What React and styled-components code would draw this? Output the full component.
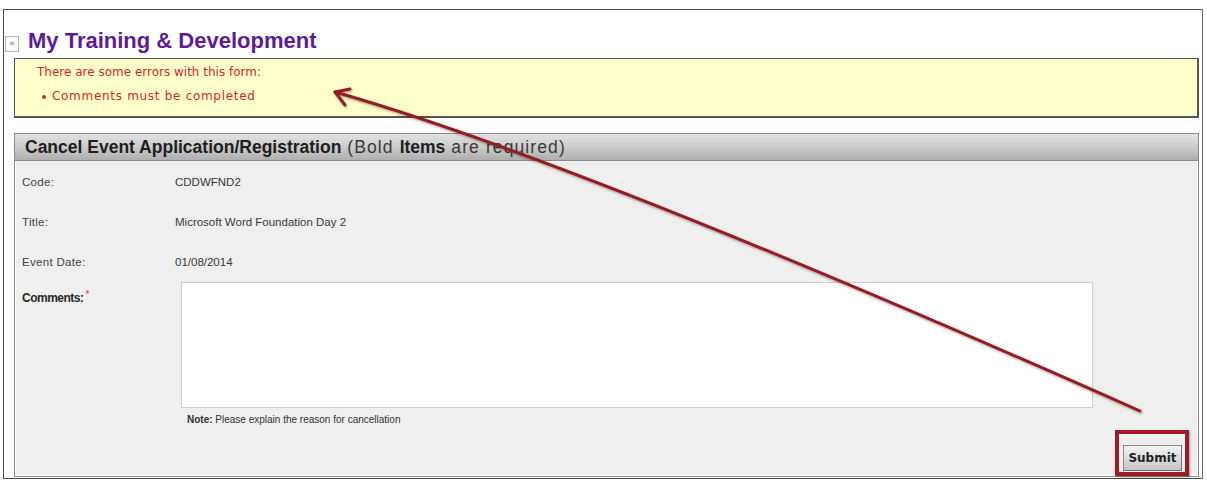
import React from "react";
import styled, { createGlobalStyle } from "styled-components";

const GlobalStyle = createGlobalStyle`
  html, body {
    margin: 0;
    padding: 0;
    background: #ffffff;
  }
  body {
    font-family: "DejaVu Sans", Verdana, sans-serif;
    color: #333;
  }
`;

const Page = styled.div`
  position: relative;
  width: 1207px;
  height: 484px;
  overflow: hidden;
  padding: 9px 4px 0 3px;
  box-sizing: border-box;
`;

const Frame = styled.div`
  height: 470px;
  border: 1px solid #4a4a4a;
  border-right-color: #6a6a6a;
  box-sizing: border-box;
  padding: 20px 3px 0 10px;
  display: flex;
  flex-direction: column;
`;

const TitleRow = styled.div`
  flex-shrink: 0;
  display: flex;
  align-items: center;
  gap: 9px;
  margin-left: -9px;
  height: 22px;
`;

const Collapse = styled.span`
  width: 12px;
  height: 14px;
  border: 1px solid #b8b8b8;
  background: #fafafa;
  color: #777;
  font-size: 9px;
  line-height: 13px;
  text-align: center;
  font-family: "DejaVu Sans", sans-serif;
  margin-top: 6px;
`;

const PageTitle = styled.h1`
  margin: 0;
  font-family: "Liberation Sans", Arial, sans-serif;
  font-size: 22px;
  font-weight: bold;
  color: #5b1c96;
`;

const ErrorBox = styled.div`
  flex-shrink: 0;
  margin-top: 6px;
  height: 60px;
  box-sizing: border-box;
  background: #ffffcc;
  border: 1px solid #555;
  border-width: 1px 2px 2px 1px;
  padding: 5px 0 0 22px;
  color: #cc2a2a;
  font-size: 12px;
  line-height: 16px;
`;

const ErrorList = styled.ul`
  margin: 8px 0 0 0;
  padding-left: 15px;
  list-style: none;
`;

const ErrorItem = styled.li`
  position: relative;
  letter-spacing: 0.7px;
  &::before {
    content: "";
    position: absolute;
    left: -10px;
    top: 7px;
    width: 4px;
    height: 4px;
    border-radius: 50%;
    background: #cc2a2a;
  }
`;

const Panel = styled.section`
  margin-top: 15px;
  margin-bottom: 1px;
  flex: 1;
  min-height: 0;
  border: 1px solid #8c8c8c;
  box-shadow: inset 0 0 0 1px #ffffff;
  background: #efefef;
  display: flex;
  flex-direction: column;
`;

const PanelHeader = styled.div`
  flex-shrink: 0;
  height: 27px;
  box-sizing: border-box;
  border-bottom: 1px solid #8a8a8a;
  background: linear-gradient(#e2e2e2, #cbcbcb 50%, #aeaeae);
  padding: 0 10px;
  display: flex;
  align-items: center;
  font-family: "Liberation Sans", Arial, sans-serif;
  font-size: 17.5px;
  color: #1e1e1e;
  white-space: pre;
`;

const Strong = styled.b`
  font-weight: bold;
`;

const Light = styled.span`
  color: #3a3a3a;
  letter-spacing: 1.1px;
`;

const PanelBody = styled.div`
  flex: 1;
  padding: 1px 0 0 7px;
  display: flex;
  flex-direction: column;
`;

const Row = styled.div`
  display: grid;
  grid-template-columns: 153px 1fr;
  height: 40px;
  align-items: center;
  font-family: "Liberation Sans", Arial, sans-serif;
  font-size: 11.5px;
  color: #3a3a3a;
`;

const Label = styled.span`
  color: #444;
  letter-spacing: 0.3px;
`;

const Asterisk = styled.span`
  color: #d83a3a;
  font-size: 10px;
  font-weight: normal;
  vertical-align: top;
  margin-left: 2px;
  position: relative;
  top: -2px;
`;

const CommentsRow = styled.div`
  display: grid;
  grid-template-columns: 159px 912px;
  font-family: "Liberation Sans", Arial, sans-serif;
`;

const CommentsLabel = styled.div`
  padding-top: 9px;
  font-size: 12px;
  font-weight: bold;
  letter-spacing: -0.5px;
  color: #2a2a2a;
`;

const Field = styled.div`
  display: flex;
  flex-direction: column;
`;

const TextArea = styled.textarea`
  width: 912px;
  height: 126px;
  box-sizing: border-box;
  border: 1px solid #cfcfcf;
  background: #fff;
  resize: none;
  margin: 0;
  padding: 4px;
  display: block;
`;

const Note = styled.div`
  margin-top: 6px;
  padding-left: 6px;
  font-size: 10px;
  color: #333;
`;

const Actions = styled.div`
  display: flex;
  justify-content: flex-end;
  padding-right: 9px;
  margin-top: auto;
`;

const Highlight = styled.div`
  border: 4px solid #9e1c24;
  padding: 11px 3px 1px 4px;
  box-shadow: 1px 1px 2px rgba(0, 0, 0, 0.35);
`;

const SubmitButton = styled.button`
  display: block;
  width: 59px;
  height: 26px;
  border: 1px solid #8a8a8a;
  border-right-color: #6d6d6d;
  border-bottom-color: #6d6d6d;
  background: linear-gradient(#f4f4f4, #d8d8d8 60%, #c4c4c4);
  font-family: "DejaVu Sans", Verdana, sans-serif;
  font-size: 12px;
  font-weight: bold;
  color: #222;
  padding: 0;
`;

const Annotation = styled.svg`
  position: absolute;
  left: 0;
  top: 0;
  pointer-events: none;
`;

const details = [
  { label: "Code:", value: "CDDWFND2" },
  { label: "Title:", value: "Microsoft Word Foundation Day 2" },
  { label: "Event Date:", value: "01/08/2014" },
];

export default function App() {
  return (
    <>
      <GlobalStyle />
      <Page>
        <Frame>
          <TitleRow>
            <Collapse>«</Collapse>
            <PageTitle>My Training &amp; Development</PageTitle>
          </TitleRow>
          <ErrorBox>
            There are some errors with this form:
            <ErrorList>
              <ErrorItem>Comments must be completed</ErrorItem>
            </ErrorList>
          </ErrorBox>
          <Panel>
            <PanelHeader>
              <Strong>Cancel Event Application/Registration</Strong>
              <Light> (Bold </Light>
              <Strong>Items</Strong>
              <Light> are required)</Light>
            </PanelHeader>
            <PanelBody>
              {details.map((d) => (
                <Row key={d.label}>
                  <Label>{d.label}</Label>
                  <span>{d.value}</span>
                </Row>
              ))}
              <CommentsRow>
                <CommentsLabel>
                  Comments:<Asterisk>*</Asterisk>
                </CommentsLabel>
                <Field>
                  <TextArea aria-label="Comments" />
                  <Note>
                    <Strong>Note:</Strong> Please explain the reason for cancellation
                  </Note>
                </Field>
              </CommentsRow>
              <Actions>
                <Highlight>
                  <SubmitButton type="button">Submit</SubmitButton>
                </Highlight>
              </Actions>
            </PanelBody>
          </Panel>
        </Frame>
        <Annotation width="1207" height="484" viewBox="0 0 1207 484">
          <defs>
            <filter id="arrowShadow" x="-5%" y="-5%" width="110%" height="110%">
              <feDropShadow dx="1" dy="1.5" stdDeviation="1" floodColor="#000" floodOpacity="0.35" />
            </filter>
          </defs>
          <g
            fill="none"
            stroke="#951b22"
            strokeWidth="3"
            strokeLinecap="round"
            strokeLinejoin="round"
            filter="url(#arrowShadow)"
          >
            <path d="M1140 411 Q575 160 335 92" />
            <path d="M350 89 L335 92 L345 105" />
          </g>
        </Annotation>
      </Page>
    </>
  );
}
